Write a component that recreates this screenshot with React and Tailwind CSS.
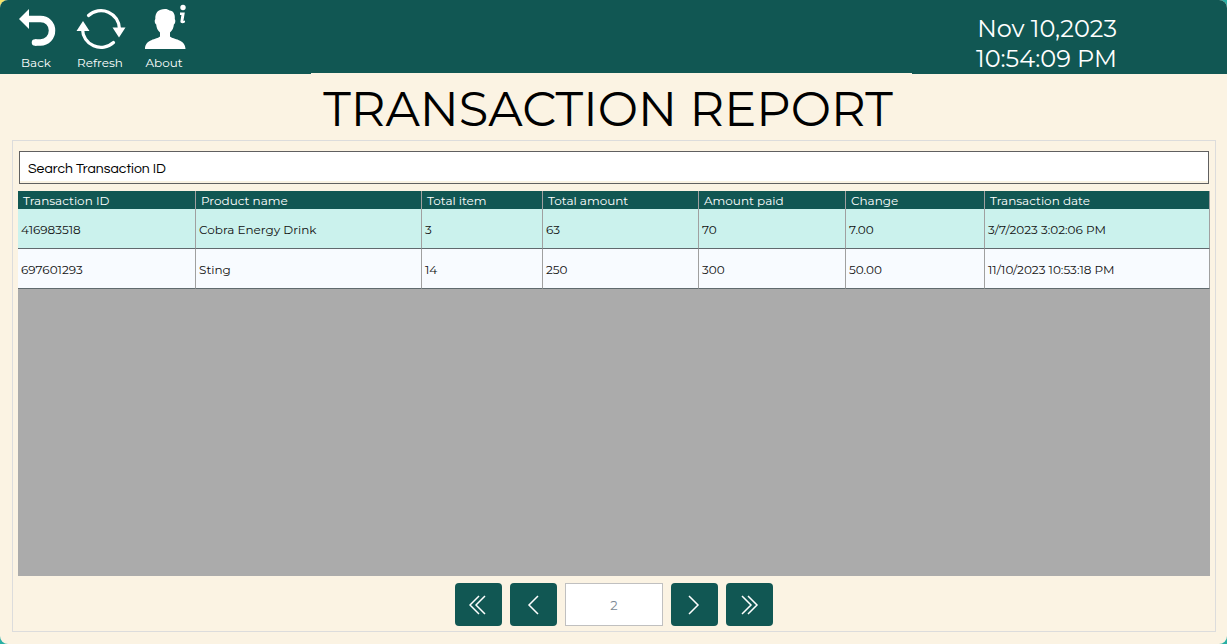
import React, { useState } from "react";

const columns = [
  { label: "Transaction ID", width: "w-[178px]" },
  { label: "Product name", width: "w-[226px]" },
  { label: "Total item", width: "w-[121px]" },
  { label: "Total amount", width: "w-[156px]" },
  { label: "Amount paid", width: "w-[147px]" },
  { label: "Change", width: "w-[139px]" },
  { label: "Transaction date", width: "" },
];

const rows = [
  ["416983518", "Cobra Energy Drink", "3", "63", "70", "7.00", "3/7/2023 3:02:06 PM"],
  ["697601293", "Sting", "14", "250", "300", "50.00", "11/10/2023 10:53:18 PM"],
];

function BackIcon() {
  return (
    <svg viewBox="0 0 40 42" className="h-[42px] w-10" fill="none" aria-hidden="true">
      <path d="M2 11 12 1v20z" fill="#fff" />
      <path d="M11 11h12.500c6.500 0 11.500 4.800 11.500 11.500s-5 12-11.500 12h-5.500" stroke="#fff" strokeWidth="6.500" />
      <circle cx="18" cy="34.500" r="3.250" fill="#fff" />
    </svg>
  );
}

function RefreshIcon() {
  return (
    <svg viewBox="0 0 50 42" className="h-[42px] w-[50px]" fill="none" aria-hidden="true">
      <path d="M12.500 7.500A18.500 18.500 0 0 1 43.500 21" stroke="#fff" strokeWidth="3.200" strokeLinecap="round" />
      <path d="M37.500 34.500A18.500 18.500 0 0 1 6.500 21" stroke="#fff" strokeWidth="3.200" strokeLinecap="round" />
      <path d="M36.500 19.500h13L43 29.500zM.5 23h13L7 13z" fill="#fff" />
    </svg>
  );
}

function AboutIcon() {
  return (
    <svg viewBox="0 0 42 46" className="h-[46px] w-[42px]" fill="#fff" aria-hidden="true">
      <path d="M16 28.500c-2.500-2-3.500-5-3.800-8-1.500-1-2-4-.9-5.500-.3-6.500 3.200-10 9.700-10 2 0 3.500.6 4.500 1.500 4 .2 5.800 4 5.300 8.500 1 1.500.6 4.500-.9 5.500-.3 3-1.400 6-3.900 8v4c3 3 15.500 2.500 15.500 12.500H1c0-10 12-9.500 15-12.500z" />
      <circle cx="39" cy="3.500" r="2.700" />
      <path d="M36 8.500h4.800l-1.400 8.500 1.600-.4v1.600c-1.500 1.300-4.600 1.600-4.600-.7l1-6.500L36 11z" />
    </svg>
  );
}

function ToolButton({ label, icon, width }) {
  return (
    <button type="button" className={"flex flex-col items-center " + width}>
      <span className="flex h-[50px] items-end justify-center pl-[2px]">{icon}</span>
      <span className="mt-[3px] text-[12px] leading-5">{label}</span>
    </button>
  );
}

function PageButton({ label, path }) {
  return (
    <button type="button" aria-label={label} className="flex h-[43px] w-[47px] items-center justify-center rounded-sm bg-[#115753]">
      <svg viewBox="0 0 20 20" className="h-5 w-5" fill="none" stroke="#fff" strokeWidth="1.500" aria-hidden="true">
        <path d={path} />
      </svg>
    </button>
  );
}

export default function App() {
  const [page, setPage] = useState("2");
  const [query, setQuery] = useState("");
  return (
    <div className="min-h-screen bg-[linear-gradient(135deg,#f5e56b_6px,#29b0a5_12px)] font-['Montserrat','Inter',sans-serif]">
      <div className="flex min-h-screen flex-col overflow-hidden rounded-lg bg-[#fbf3e3]">
        <header className="flex h-[74px] items-start justify-between bg-[#115753] text-white">
          <nav className="flex pl-1">
            <ToolButton label="Back" width="w-16" icon={<BackIcon />} />
            <ToolButton label="Refresh" width="w-16" icon={<RefreshIcon />} />
            <ToolButton label="About" width="w-16" icon={<AboutIcon />} />
          </nav>
          <div className="mr-[110px] pt-[14px] text-right text-2xl leading-[30px]">
            <p>Nov 10,2023</p>
            <p>10:54:09 PM</p>
          </div>
        </header>

        <h1 className="-mt-px mr-[5px] w-[601px] self-center bg-[#fbf3e3] pt-[5px] pr-[6px] text-center text-[48px] leading-[62px] whitespace-nowrap text-black">
          TRANSACTION REPORT
        </h1>

        <main className="mx-3 mr-[11px] mb-3 flex grow flex-col border border-[#dcdcdc] px-[5px] pt-[10px] pb-[5px]">
          <input
            type="text"
            aria-label="Search Transaction ID"
            placeholder="Search Transaction ID"
            value={query}
            onChange={(e) => setQuery(e.target.value)}
            className="mx-px h-[33px] border border-[#606060] bg-white px-2 pt-[2px] font-['Century_Gothic','URW_Gothic','Questrial','Didact_Gothic','Inter',sans-serif] text-[14px] text-black shadow-[inset_0_-2px_0_#fbf3e3] outline-none placeholder:text-black"
          />
          <div className="mt-[7px] grow bg-[#ababab]">
            <table className="w-full table-fixed border-separate border-spacing-0 text-left">
              <thead>
                <tr className="bg-[#115753] text-white">
                  {columns.map((c) => (
                    <th key={c.label} scope="col" className={"h-[18px] border-r border-[#a0a0a0] p-0 pt-[2px] pl-[5px] text-[12px] leading-4 font-normal " + c.width}>
                      {c.label}
                    </th>
                  ))}
                </tr>
              </thead>
              <tbody>
                {rows.map((r, i) => (
                  <tr key={r[0]} className={i === 0 ? "bg-[#cbf2ed]" : "bg-[#f8fbff]"}>
                    {r.map((v, j) => (
                      <td key={j} className="h-10 border-r border-b border-r-[#a0a0a0] border-b-[#606a6e] p-0 pt-[2px] pl-[3px] text-[12px] leading-4 text-[#101010]">
                        {v}
                      </td>
                    ))}
                  </tr>
                ))}
              </tbody>
            </table>
          </div>
          <div className="mt-[7px] flex justify-center gap-2">
            <PageButton label="First page" path="M10 1 1 10l9 9M16 1 7 10l9 9" />
            <PageButton label="Previous page" path="M14 1 5 10l9 9" />
            <input
              type="text"
              aria-label="Page number"
              value={page}
              onChange={(e) => setPage(e.target.value)}
              className="h-[43px] w-[98px] border border-[#c0c0c0] bg-white text-center text-[13px] text-[#7d8995] outline-none"
            />
            <PageButton label="Next page" path="M4 1l9 9-9 9" />
            <PageButton label="Last page" path="M2 1l9 9-9 9M8 1l9 9-9 9" />
          </div>
        </main>
      </div>
    </div>
  );
}
